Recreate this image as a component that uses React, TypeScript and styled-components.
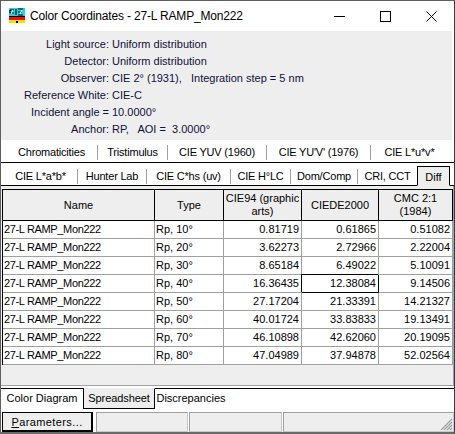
import React from 'react';
import styled, { createGlobalStyle } from 'styled-components';

const GlobalStyle = createGlobalStyle`
  html, body { margin: 0; padding: 0; background: #fff; }
  body { font-family: "Liberation Sans", Arial, sans-serif; font-size: 11px; color: #000; }
`;

const infoRows = [
  { label: 'Light source:', value: 'Uniform distribution' },
  { label: 'Detector:', value: 'Uniform distribution' },
  { label: 'Observer:', value: 'CIE 2° (1931),   Integration step = 5 nm' },
  { label: 'Reference White:', value: 'CIE-C' },
  { label: 'Incident angle =', value: '10.0000°' },
  { label: 'Anchor:', value: 'RP,   AOI =  3.0000°' },
];

const topTabs = [
  { text: 'Chromaticities', w: 92 },
  { text: 'Tristimulus', w: 70 },
  { text: 'CIE YUV (1960)', w: 99 },
  { text: "CIE YU'V' (1976)", w: 104 },
  { text: 'CIE L*u*v*', w: 77 },
];
const lowerTabs = [
  { text: 'CIE L*a*b*', w: 74 },
  { text: 'Hunter Lab', w: 69 },
  { text: 'CIE C*hs (uv)', w: 84 },
  { text: 'CIE H°LC', w: 60 },
  { text: 'Dom/Comp', w: 67 },
  { text: 'CRI, CCT', w: 59 },
];

const rows = [
  ['Rp, 10°', '0.81719', '0.61865', '0.51082'],
  ['Rp, 20°', '3.62273', '2.72966', '2.22004'],
  ['Rp, 30°', '8.65184', '6.49022', '5.10091'],
  ['Rp, 40°', '16.36435', '12.38084', '9.14506'],
  ['Rp, 50°', '27.17204', '21.33391', '14.21327'],
  ['Rp, 60°', '40.01724', '33.83833', '19.13491'],
  ['Rp, 70°', '46.10898', '42.62060', '20.19095'],
  ['Rp, 80°', '47.04989', '37.94878', '52.02564'],
];

const Win = styled.div`
  width: 455px;
  height: 434px;
  box-sizing: border-box;
  display: flex;
  flex-direction: column;
  border-top: 1px solid #5f5f5f;
  border-left: 1px solid #5f5f5f;
  border-right: 1px solid #1f4a4a;
  border-bottom: 2px solid #6a6a6a;
  background: #fff;
  overflow: hidden;
`;
const TitleBar = styled.div`
  height: 30px;
  flex: none;
  display: flex;
  align-items: center;
  padding-left: 8px;
  font-size: 12px;
  letter-spacing: -0.17px;
`;
const TitleText = styled.span`
  margin-left: 5px;
  flex: 1;
`;
const WinButton = styled.div`
  width: 46px;
  height: 30px;
  display: flex;
  align-items: center;
  justify-content: center;
`;
const InfoPanel = styled.div`
  height: 109px;
  flex: none;
  box-sizing: border-box;
  padding-top: 4px;
  margin-right: 2px;
  background: #eeeeee;
`;
const InfoRow = styled.div`
  height: 17px;
  display: flex;
  align-items: center;
  color: #10103a;
`;
const InfoLabel = styled.div`
  width: 108px;
  text-align: right;
  flex: none;
`;
const InfoValue = styled.div`
  margin-left: 3px;
  white-space: pre;
`;
const TabRowTop = styled.div`
  height: 23px;
  flex: none;
  box-sizing: border-box;
  display: flex;
  align-items: flex-end;
  padding: 0 0 2px 5px;
  border-bottom: 1px solid #000;
`;
const TabRowLower = styled.div`
  height: 23px;
  flex: none;
  box-sizing: border-box;
  display: flex;
  align-items: flex-end;
  padding-left: 3px;
  border-bottom: 1px solid #000;
`;
const FlatTab = styled.div<{ $w: number; $last?: boolean }>`
  width: ${p => p.$w}px;
  height: 15px;
  line-height: 15px;
  flex: none;
  text-align: center;
  white-space: nowrap;
  letter-spacing: -0.2px;
  box-sizing: border-box;
  border-right: ${p => (p.$last ? 'none' : '1px solid #a0a0a0')};
`;
const LowerTab = styled(FlatTab)`
  margin-bottom: 1px;
`;
const ActiveTab = styled.div`
  width: 33px;
  height: 20px;
  line-height: 21px;
  box-sizing: border-box;
  margin-bottom: -1px;
  text-align: center;
  background: #eeeeee;
  border: 1px solid #000;
  border-bottom-color: #eeeeee;
`;
const GridArea = styled.div`
  height: 200px;
  flex: none;
  box-sizing: border-box;
  background: #eeeeee;
  padding: 3px 0 0 1px;
  border-bottom: 1px solid #a0a0a0;
  border-right: 1px solid #a0a0a0;
`;
const Table = styled.div`
  display: grid;
  grid-template-columns: 152px 69px 78px 77px 74px;
  grid-template-rows: 32px repeat(8, 18px);
  width: 451px;
  border-left: 1px solid #000;
  box-sizing: border-box;
`;
const HeadCell = styled.div`
  background: #eeeeee;
  display: flex;
  align-items: center;
  justify-content: center;
  text-align: center;
  line-height: 13px;
  box-sizing: border-box;
  border-top: 1px solid #000;
  border-right: 1px solid #000;
  border-bottom: 1px solid #000;
`;
const Cell = styled.div<{ $num?: boolean; $focus?: boolean }>`
  background: #fff;
  box-sizing: border-box;
  white-space: nowrap;
  overflow: hidden;
  line-height: 17px;
  padding: 0 2px 0 1px;
  text-align: ${p => (p.$num ? 'right' : 'left')};
  border-right: 1px solid ${p => (p.$focus ? '#000' : '#a0a0a0')};
  border-bottom: 1px solid ${p => (p.$focus ? '#000' : '#a0a0a0')};
  box-shadow: ${p => (p.$focus ? '-1px -1px 0 0 #000' : 'none')};
  position: ${p => (p.$focus ? 'relative' : 'static')};
`;
const NameCell = styled(Cell)`
  letter-spacing: -0.35px;
`;
const BottomTabs = styled.div`
  height: 23px;
  flex: none;
  box-sizing: border-box;
  display: flex;
  padding-top: 2px;
`;
const BottomTab = styled.div<{ $w: number }>`
  width: ${p => p.$w}px;
  flex: none;
  box-sizing: border-box;
  line-height: 18px;
  text-align: center;
  white-space: nowrap;
  border-top: 1px solid #000;
`;
const OpenTab = styled(BottomTab)`
  border-right: 1px solid #000;
`;
const SelectedTab = styled(BottomTab)`
  background: #eeeeee;
  border-top: 1px solid #eeeeee;
  border-right: 1px solid #000;
  border-bottom: 1px solid #000;
  letter-spacing: -0.1px;
`;
const TabLine = styled.div`
  flex: 1;
  border-top: 1px solid #000;
`;
const StatusBar = styled.div`
  height: 23px;
  flex: none;
  display: flex;
  gap: 1px;
  padding-top: 3px;
  box-sizing: border-box;
`;
const ParamsButton = styled.div`
  width: 91px;
  height: 20px;
  line-height: 18px;
  box-sizing: border-box;
  margin: 0 2px 0 1px;
  text-align: center;
  letter-spacing: 0.4px;
  background: #eeeeee;
  border: 1px solid #000;
  border-right-width: 2px;
  border-bottom-width: 2px;
`;
const Underlined = styled.span`
  text-decoration: underline;
`;
const Pane = styled.div<{ $w: number }>`
  position: relative;
  width: ${p => p.$w}px;
  height: 20px;
  box-sizing: border-box;
  flex: none;
  background: #eeeeee;
  border: 1px solid #a0a0a0;
  border-right-color: #c8c8c8;
  border-bottom-color: #c8c8c8;
`;
const Grip = styled.svg`
  position: absolute;
  right: 0;
  bottom: 0;
`;

const CieIcon = () => (
  <svg width="16" height="16" viewBox="0 0 16 16">
    <rect x="0" y="0" width="16" height="8" fill="#22d3e6" />
    <path d="M1 2h4M1 2v3h4M7 1v6M9 1h5M9 4h4M9 7h5" stroke="#000" strokeWidth="1.2" fill="none" />
    <path d="M2 6l2-4M11 6l2-4" stroke="#fff" strokeWidth="1" fill="none" />
    <rect x="0" y="8" width="16" height="1" fill="#000" />
    <rect x="0" y="9" width="16" height="3" fill="#ee1111" />
    <rect x="0" y="12" width="16" height="3" fill="#f5e000" />
    <rect x="7" y="13" width="2" height="2" fill="#000" />
  </svg>
);

export default function App() {
  return (
    <>
      <GlobalStyle />
      <Win>
        <TitleBar>
          <CieIcon />
          <TitleText>Color Coordinates - 27-L RAMP_Mon222</TitleText>
          <WinButton>
            <svg width="11" height="11" viewBox="0 0 11 11"><path d="M0 5.5h11" stroke="#000" fill="none" /></svg>
          </WinButton>
          <WinButton>
            <svg width="11" height="11" viewBox="0 0 11 11"><rect x=".5" y=".5" width="10" height="10" stroke="#000" fill="none" /></svg>
          </WinButton>
          <WinButton>
            <svg width="11" height="11" viewBox="0 0 11 11"><path d="M.5.5l10 10M10.5.5l-10 10" stroke="#000" fill="none" /></svg>
          </WinButton>
        </TitleBar>
        <InfoPanel>
          {infoRows.map(r => (
            <InfoRow key={r.label}>
              <InfoLabel>{r.label}</InfoLabel>
              <InfoValue>{r.value}</InfoValue>
            </InfoRow>
          ))}
        </InfoPanel>
        <TabRowTop>
          {topTabs.map((t, i) => (
            <FlatTab key={t.text} $w={t.w} $last={i === topTabs.length - 1}>{t.text}</FlatTab>
          ))}
        </TabRowTop>
        <TabRowLower>
          {lowerTabs.map((t, i) => (
            <LowerTab key={t.text} $w={t.w} $last={i === lowerTabs.length - 1}>{t.text}</LowerTab>
          ))}
          <ActiveTab>Diff</ActiveTab>
        </TabRowLower>
        <GridArea>
          <Table>
            <HeadCell>Name</HeadCell>
            <HeadCell>Type</HeadCell>
            <HeadCell>CIE94 (graphic arts)</HeadCell>
            <HeadCell>CIEDE2000</HeadCell>
            <HeadCell>CMC 2:1<br />(1984)</HeadCell>
            {rows.map((r, i) => (
              <React.Fragment key={r[0]}>
                <NameCell>27-L RAMP_Mon222</NameCell>
                <Cell>{r[0]}</Cell>
                <Cell $num>{r[1]}</Cell>
                <Cell $num $focus={i === 3}>{r[2]}</Cell>
                <Cell $num>{r[3]}</Cell>
              </React.Fragment>
            ))}
          </Table>
        </GridArea>
        <BottomTabs>
          <OpenTab $w={83}>Color Diagram</OpenTab>
          <SelectedTab $w={71}>Spreadsheet</SelectedTab>
          <BottomTab $w={72}>Discrepancies</BottomTab>
          <TabLine />
        </BottomTabs>
        <StatusBar>
          <ParamsButton><Underlined>P</Underlined>arameters...</ParamsButton>
          <Pane $w={92} />
          <Pane $w={93} />
          <Pane $w={171}>
            <Grip width="13" height="13" viewBox="0 0 13 13">
              <path d="M12 1L1 12M12 4L4 12M12 7L7 12M12 10L10 12" stroke="#a0a0a0" strokeWidth="1.2" fill="none" />
            </Grip>
          </Pane>
        </StatusBar>
      </Win>
    </>
  );
}
